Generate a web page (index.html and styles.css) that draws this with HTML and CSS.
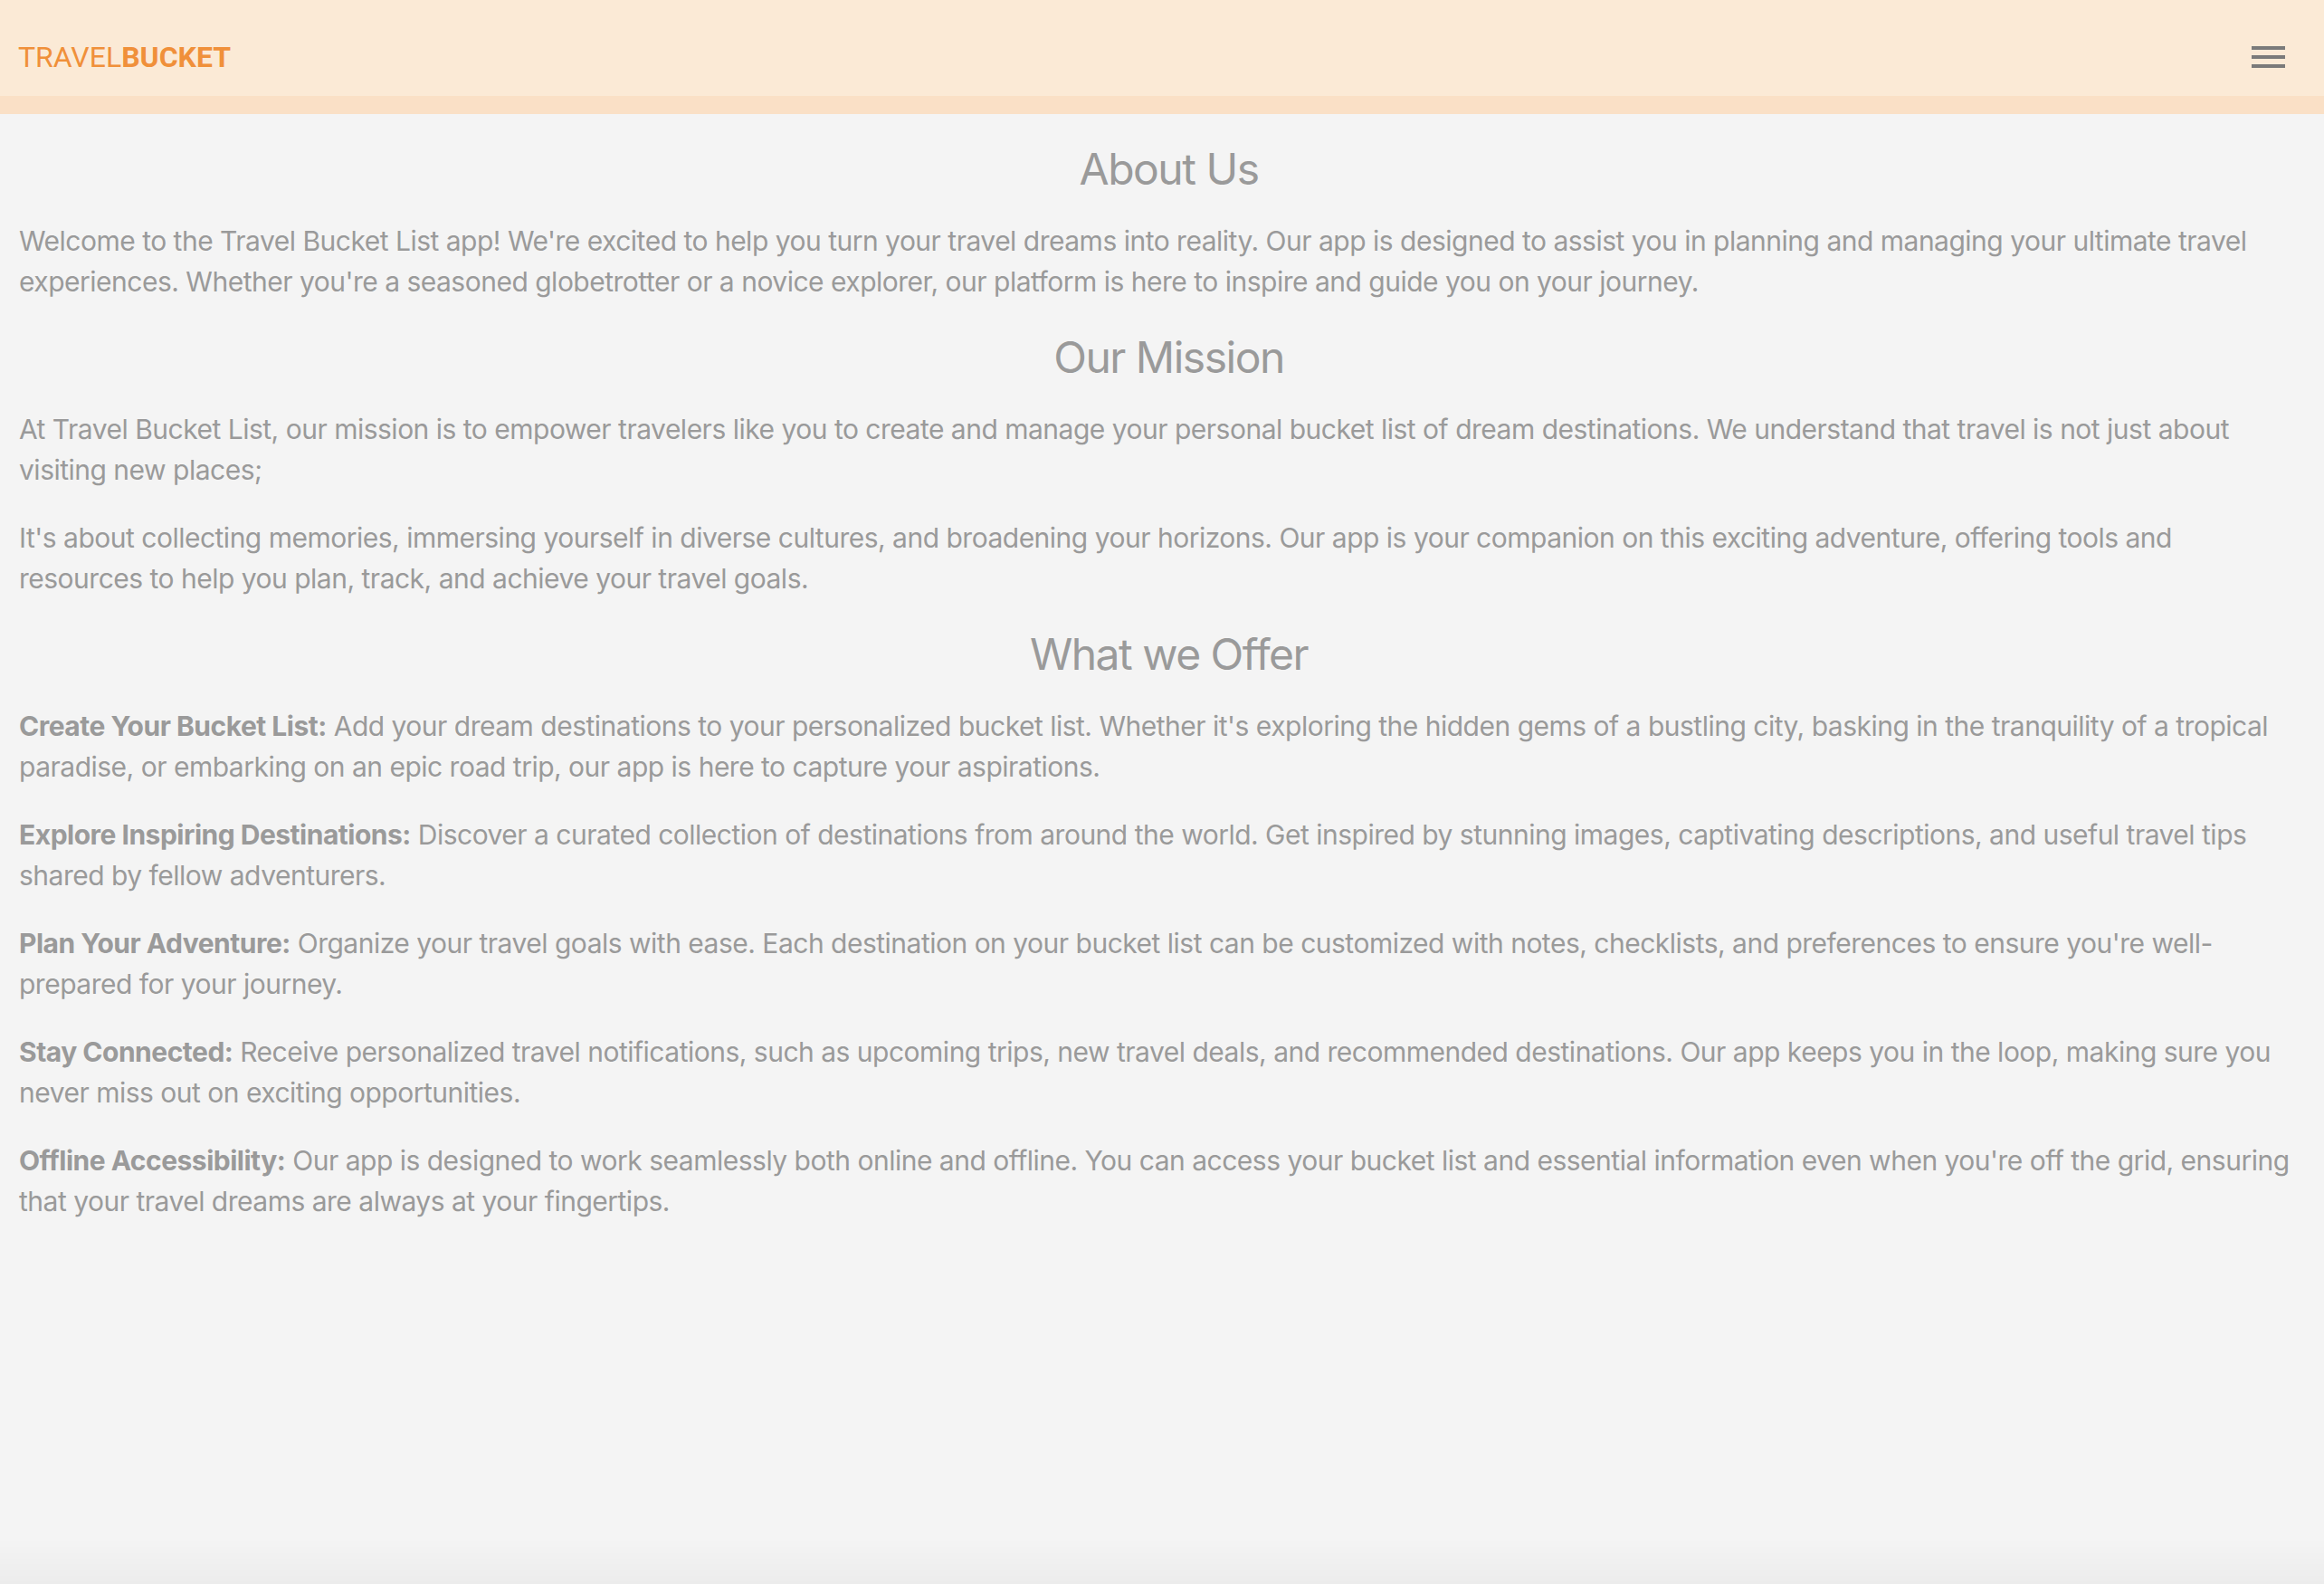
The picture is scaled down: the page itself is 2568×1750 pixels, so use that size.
FILE: index.html
```html
<!DOCTYPE html>
<html lang="en">
<head>
<meta charset="utf-8">
<title>Travel Bucket - About Us</title>
<link rel="stylesheet" href="styles.css">
</head>
<body>
<header class="topbar">
  <div class="logo"><span class="logo-light">TRAVEL</span><span class="logo-bold">BUCKET</span></div>
  <button class="menu-btn" aria-label="Menu">
    <svg width="37" height="24" viewBox="0 0 37 24"><rect x="0" y="0" width="37" height="4" fill="#7a7a7a"/><rect x="0" y="10" width="37" height="4" fill="#7a7a7a"/><rect x="0" y="20" width="37" height="4" fill="#7a7a7a"/></svg>
  </button>
</header>
<main class="content">
  <h2 class="title first">About Us</h2>
  <p>Welcome to the Travel Bucket List app! We're excited to help you turn your travel dreams into reality. Our app is designed to assist you in planning and managing your ultimate travel experiences. Whether you're a seasoned globetrotter or a novice explorer, our platform is here to inspire and guide you on your journey.</p>
  <h2 class="title">Our Mission</h2>
  <p>At Travel Bucket List, our mission is to empower travelers like you to create and manage your personal bucket list of dream destinations. We understand that travel is not just about visiting new places;</p>
  <p>It's about collecting memories, immersing yourself in diverse cultures, and broadening your horizons. Our app is your companion on this exciting adventure, offering tools and resources to help you plan, track, and achieve your travel goals.</p>
  <h2 class="title">What we Offer</h2>
  <p><strong>Create Your Bucket List:</strong> Add your dream destinations to your personalized bucket list. Whether it's exploring the hidden gems of a bustling city, basking in the tranquility of a tropical paradise, or embarking on an epic road trip, our app is here to capture your aspirations.</p>
  <p><strong>Explore Inspiring Destinations:</strong> Discover a curated collection of destinations from around the world. Get inspired by stunning images, captivating descriptions, and useful travel tips shared by fellow adventurers.</p>
  <p><strong>Plan Your Adventure:</strong> Organize your travel goals with ease. Each destination on your bucket list can be customized with notes, checklists, and preferences to ensure you're well-prepared for your journey.</p>
  <p><strong>Stay Connected:</strong> Receive personalized travel notifications, such as upcoming trips, new travel deals, and recommended destinations. Our app keeps you in the loop, making sure you never miss out on exciting opportunities.</p>
  <p><strong>Offline Accessibility:</strong> Our app is designed to work seamlessly both online and offline. You can access your bucket list and essential information even when you're off the grid, ensuring that your travel dreams are always at your fingertips.</p>
</main>
<div class="bottom-shade"></div>
</body>
</html>
```
FILE: styles.css
```css
html, body {
  margin: 0;
  padding: 0;
  background: #f4f4f4;
}
body {
  font-family: Inter, "Noto Sans", sans-serif;
  color: #9a9a9a;
  min-height: 1750px;
}
.topbar {
  box-sizing: border-box;
  height: 126px;
  padding: 0 43px 0 20px;
  display: flex;
  align-items: center;
  justify-content: space-between;
  background: #fbead6;
  box-shadow: inset 0 -20px 0 #fae0c6;
}
.logo {
  font-family: Roboto, "Liberation Sans", sans-serif;
  font-size: 32px;
  color: #f0903a;
  line-height: 1;
  letter-spacing: 0;
}
.logo-light { font-weight: 400; }
.logo-bold { font-weight: 700; }
.menu-btn {
  border: 0;
  padding: 0;
  background: transparent;
  display: flex;
  width: 37px;
  height: 24px;
}
.content {
  display: flex;
  flex-direction: column;
  padding: 29.5px 30px 0 21px;
}
.title {
  margin: 2px 0 28.5px;
  padding-left: 24px;
  font-size: 48px;
  font-weight: 400;
  line-height: 1.2;
  letter-spacing: -1.5px;
  text-align: center;
  color: #9a9a9a;
}
.content p {
  margin: 0 0 30px;
  font-size: 30px;
  line-height: 45px;
  letter-spacing: -0.5px;
}
.content strong {
  font-weight: 700;
}
.bottom-shade {
  position: fixed;
  left: 0;
  right: 0;
  bottom: 0;
  height: 50px;
  background: linear-gradient(to bottom, rgba(0,0,0,0), rgba(0,0,0,0.03));
  pointer-events: none;
}
```
